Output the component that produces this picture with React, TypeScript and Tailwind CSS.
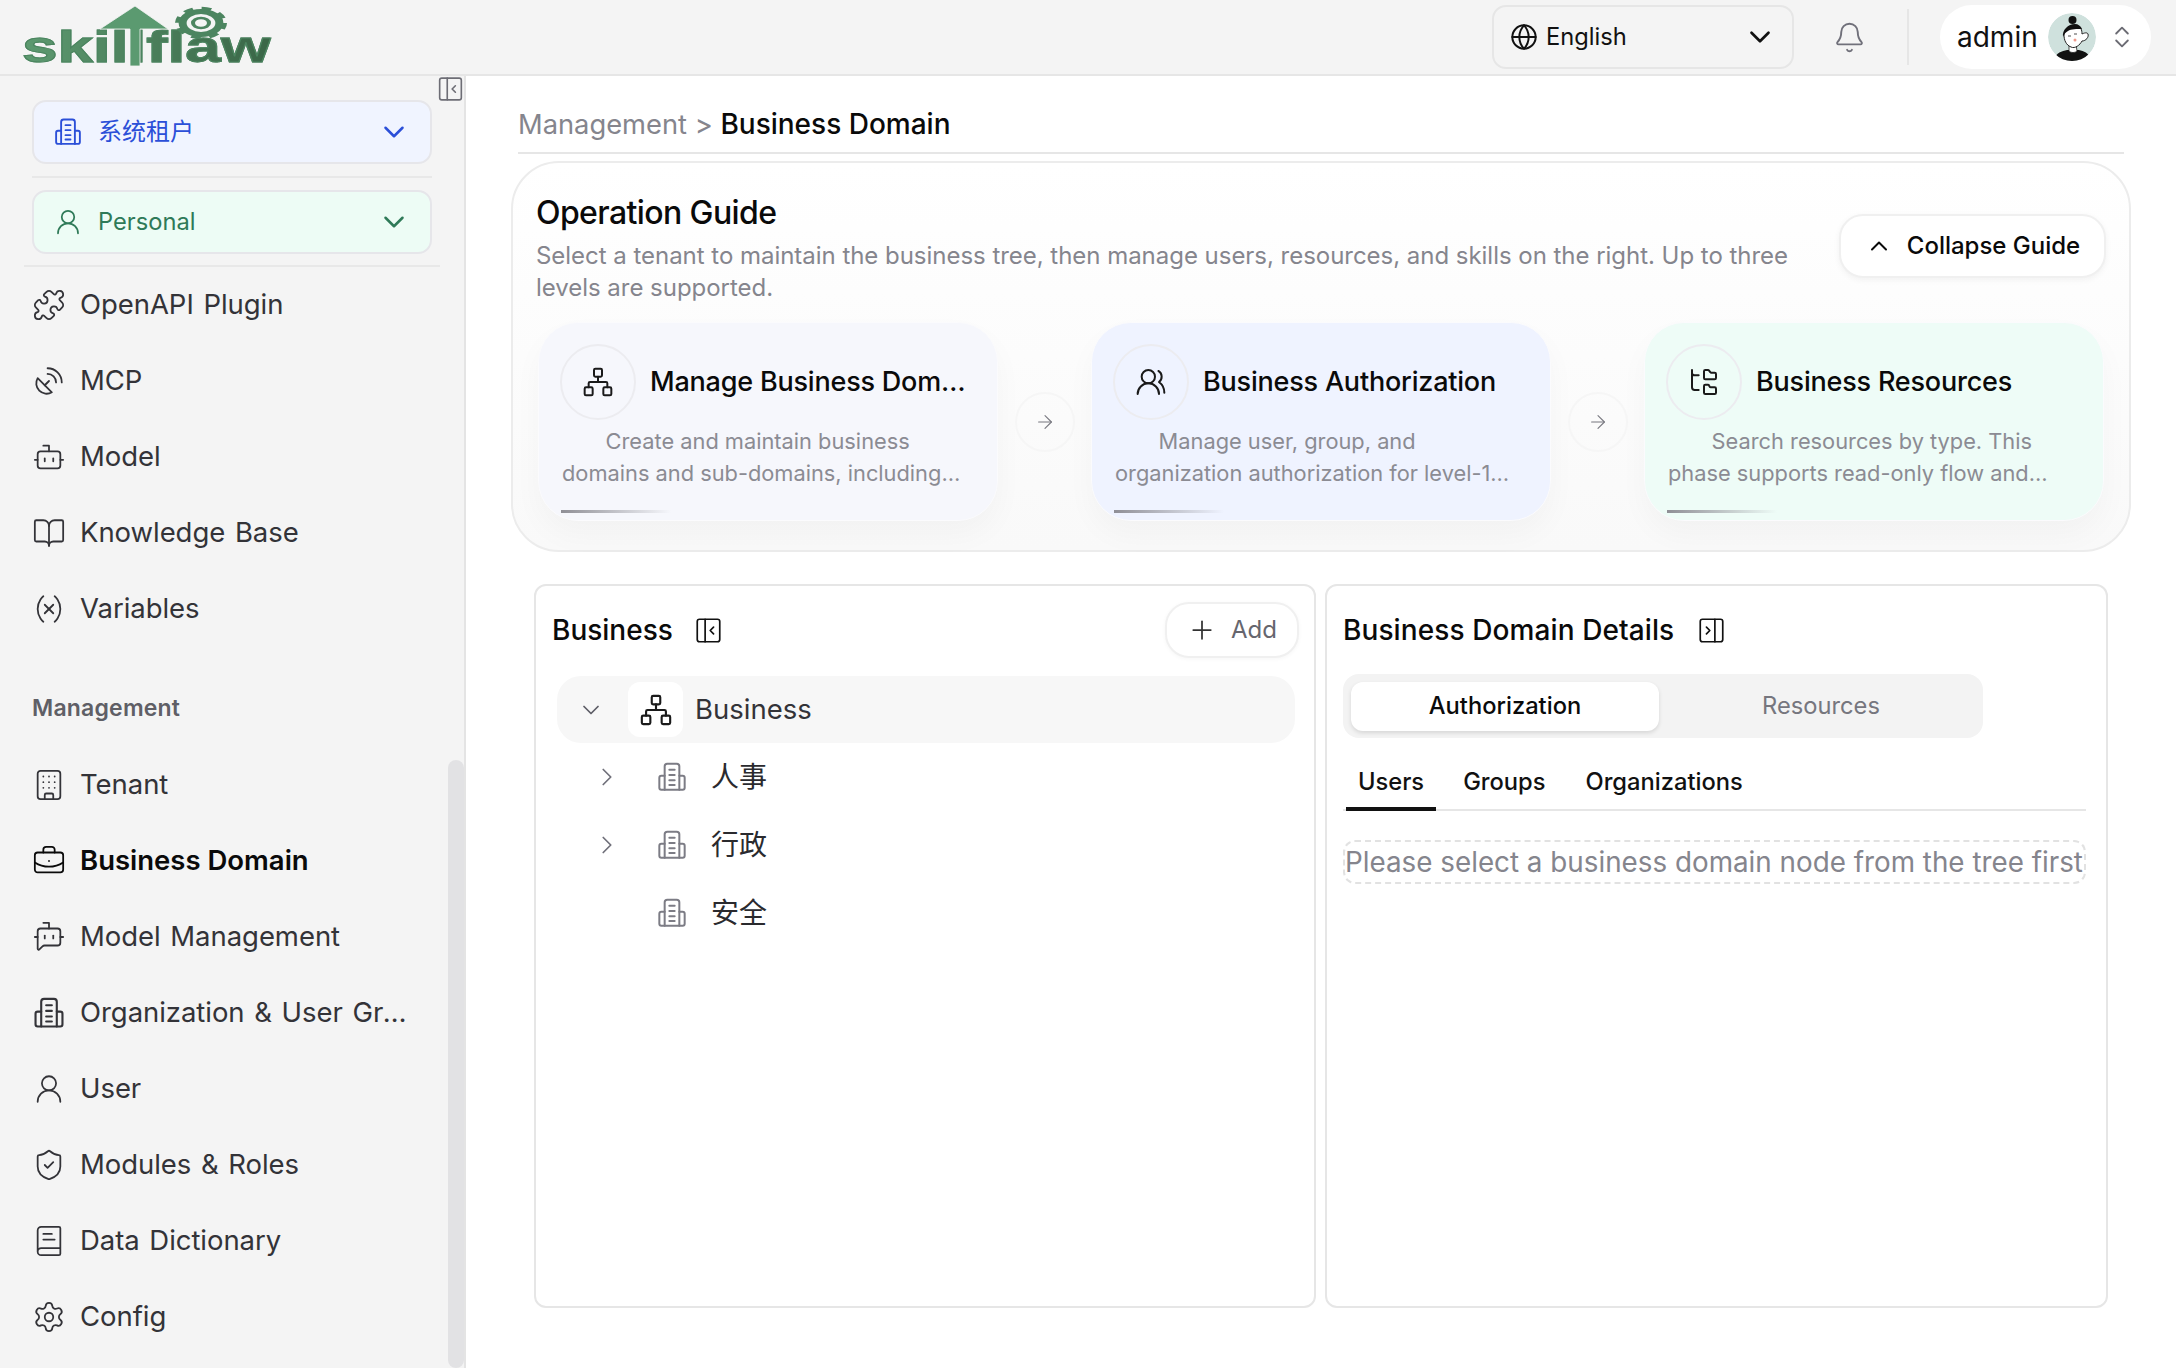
import React from "react";
import {
    ArrowRight, Bell, BookOpen, BookText, Bot, BotMessageSquare, BriefcaseBusiness, Building, ChevronDown,
    ChevronRight, ChevronUp, ChevronsUpDown, FolderTree, Globe, Network, Plus, Puzzle, SatelliteDish, Settings,
    ShieldCheck, UserRound, UsersRound, Variable,
} from "lucide-react";

function TowerIcon({className}: { className?: string }) {
    return (
        <svg viewBox="0 0 24 24" fill="none" stroke="currentColor" strokeWidth="1.5" strokeLinecap="round" strokeLinejoin="round" className={className}>
            <path d="M6.5 21.5V4a2 2 0 0 1 2-2h7a2 2 0 0 1 2 2v17.5"/>
            <path d="M6.5 11H4a1.5 1.5 0 0 0-1.500 1.500V20A1.500 1.500 0 0 0 4 21.500h16a1.500 1.500 0 0 0 1.500-1.500v-7.500A1.500 1.500 0 0 0 20 11h-2.500"/>
            <path d="M10 6.500h4M10 10.500h4M10 14.500h4M10 18h4"/>
        </svg>
    )
}

function PanelToggle({className, right}: { className?: string, right?: boolean }) {
    return (
        <svg viewBox="0 0 24 24" fill="none" stroke="currentColor" strokeWidth="1.500" strokeLinecap="round" strokeLinejoin="round" className={className}>
            <rect x="2" y="2" width="20" height="20" rx="2"/>
            {right ? <path d="M15 2v20M7.500 9l3 3-3 3"/> : <path d="M9 2v20M16.500 9l-3 3 3 3"/>}
        </svg>
    )
}

function Logo() {
    return (
        <div className="relative h-[75px] w-[272px] shrink-0">
            <span className="absolute left-[22px] top-[21px] origin-left scale-x-[1.42] bg-gradient-to-r from-[#5d9a70] to-[#3a6647] bg-clip-text font-['Liberation_Sans',sans-serif] text-[45px] font-bold leading-[52px] text-transparent [-webkit-text-stroke:1px_#4c8560]">
                skillflaw
            </span>
            <svg viewBox="0 0 272 75" className="absolute left-0 top-0 h-[75px] w-[272px]">
                <path d="M100 29 L135 6 L168 29 L140 29 L140 66 L130 66 L130 29 Z" fill="#5b9a70" stroke="#f4f4f4" strokeWidth="0.800"/>
                <g transform="translate(201 23) scale(1.600 1)" fill="none" stroke="#4c8560">
                    <circle r="11.500" strokeWidth="5"/>
                    <circle r="14.500" strokeWidth="3.500" strokeDasharray="6 5.380"/>
                    <circle r="5" strokeWidth="2.500"/>
                </g>
            </svg>
        </div>
    )
}

function Avatar() {
    return (
        <svg viewBox="0 0 48 48" className="h-[48px] w-[48px] shrink-0 rounded-full">
            <circle cx="24" cy="24" r="24" fill="#cfe1dd"/>
            <path d="M7 44c3-5 9-7 14-7 2 2 6 2 8 0 5 0 10 2 13 7v4H7Z" fill="#111"/>
            <path d="M21 33v5c2 2 6 2 8 0l-1-7Z" fill="#fff" stroke="#222" strokeWidth="0.800"/>
            <path d="M16 22c0-6 7-10 13-9 4 1 5 4 5 8 2-1 5-2 6 0 1 3-2 7-6 7-2 4-7 8-11 6-5-2-7-7-7-12Z" fill="#fff" stroke="#222" strokeWidth="1"/>
            <path d="M15 24c-1-7 5-13 12-13 3 0 6 2 7 5-5 0-11 0-14 2-2 1-4 3-5 6Z" fill="#111"/>
            <circle cx="24.500" cy="7" r="4" fill="#111"/>
            <circle cx="27" cy="27" r="1.500" fill="#ef9a8c"/>
            <path d="M20 23h3M26 21h3" stroke="#222" strokeWidth="0.800"/>
        </svg>
    )
}

function SideItem({icon: Icon, label, active}: { icon: React.ElementType, label: string, active?: boolean }) {
    return (
        <div className={active
            ? "flex h-[76px] items-center gap-[14px] pl-[32px] pr-[50px] text-[#0a0a0a]"
            : "flex h-[76px] items-center gap-[14px] pl-[32px] pr-[50px] text-[#333338]"}>
            <Icon className="h-[34px] w-[34px] shrink-0" strokeWidth={1.25}/>
            <span className={active
                ? "truncate text-[27.500px] font-semibold"
                : "truncate text-[27.500px] tracking-[-0.05px] [word-spacing:2px]"}>{label}</span>
        </div>
    )
}

function Sidebar() {
    return (
        <aside className="relative w-[466px] shrink-0 overflow-hidden border-r-2 border-[#e4e4e4] bg-[#f4f4f4] pt-[24px]">
            <PanelToggle className="absolute right-0 top-0 h-[26px] w-[27px] text-[#6d6d75]"/>
            <div className="absolute bottom-0 right-0 top-[684px] w-[16px] rounded-full bg-[#e2e2e4]"/>
            <div className="mx-[32px] flex h-[64px] w-[400px] items-center justify-between rounded-[14px] border-2 border-[#e6e6ea] bg-[#f0f4ff] pl-[19px] pr-[19px] text-[#2b4fd8]">
                <div className="flex items-center gap-[15px]">
                    <TowerIcon className="h-[30px] w-[30px]"/>
                    <span className="text-[24px]">系统租户</span>
                </div>
                <ChevronDown className="h-[34px] w-[34px]" strokeWidth={1.8}/>
            </div>
            <div className="mx-[32px] my-[12px] h-[2px] w-[400px] bg-[#e8e8e8]"/>
            <div className="mx-[32px] flex h-[64px] w-[400px] items-center justify-between rounded-[14px] border-2 border-[#e6e6ea] bg-[#edfcf5] pl-[19px] pr-[19px] text-[#2f7a58]">
                <div className="flex items-center gap-[15px]">
                    <UserRound className="h-[30px] w-[30px]" strokeWidth={1.4}/>
                    <span className="text-[23.700px]">Personal</span>
                </div>
                <ChevronDown className="h-[34px] w-[34px]" strokeWidth={1.8}/>
            </div>
            <div className="mx-[24px] mt-[11px] h-[2px] w-[416px] bg-[#e8e8e8]"/>
            <SideItem icon={Puzzle} label="OpenAPI Plugin"/>
            <SideItem icon={SatelliteDish} label="MCP"/>
            <SideItem icon={Bot} label="Model"/>
            <SideItem icon={BookOpen} label="Knowledge Base"/>
            <SideItem icon={Variable} label="Variables"/>
            <div className="h-[100px] pl-[32px] pt-[47px] text-[23px] font-semibold leading-[28px] tracking-[0.2px] text-[#5f5f66]">Management</div>
            <SideItem icon={Building} label="Tenant"/>
            <SideItem icon={BriefcaseBusiness} label="Business Domain" active/>
            <SideItem icon={BotMessageSquare} label="Model Management"/>
            <SideItem icon={TowerIcon} label="Organization & User Groups"/>
            <SideItem icon={UserRound} label="User"/>
            <SideItem icon={ShieldCheck} label="Modules & Roles"/>
            <SideItem icon={BookText} label="Data Dictionary"/>
            <SideItem icon={Settings} label="Config"/>
        </aside>
    )
}

const guideCards = [
    {
        icon: Network,
        title: "Manage Business Domains",
        desc: "Create and maintain business domains and sub-domains, including creating, editing and removing nodes in the tree.",
        bg: "bg-[#f6f7fc]",
    },
    {
        icon: UsersRound,
        title: "Business Authorization",
        desc: "Manage user, group, and organization authorization for level-1 domains and for each of their sub-domains.",
        bg: "bg-[#eff3ff]",
    },
    {
        icon: FolderTree,
        title: "Business Resources",
        desc: "Search resources by type. This phase supports read-only flow and management of the resources in each domain.",
        bg: "bg-[#eefcf7]",
    },
]

function GuideCard({card}: { card: typeof guideCards[number] }) {
    const Icon = card.icon
    return (
        <div className={"relative h-[199px] w-[460px] shrink-0 overflow-hidden rounded-[40px] border border-[#fbfbfd] pl-[21px] pr-[22px] pt-[21px] shadow-[0_14px_30px_rgba(0,0,0,0.03)] " + card.bg}>
            <div className="flex items-center gap-[14px]">
                <div className="flex h-[76px] w-[76px] shrink-0 items-center justify-center rounded-full border-2 border-[#ececf0]">
                    <Icon className="h-[32px] w-[32px] text-[#1a1a1a]" strokeWidth={1.5}/>
                </div>
                <span className="truncate text-[27px] font-medium tracking-[-0.2px] text-[#0a0a0a]">{card.title}</span>
            </div>
            <p className="ml-[2px] mt-[5px] line-clamp-2 w-[399px] indent-[2em] text-[21.800px] leading-[32px] text-[#8b8b93]">{card.desc}</p>
            <div className="absolute bottom-[7px] left-[22px] h-[3px] w-[110px] bg-gradient-to-r from-[#8f8f96] to-transparent"/>
        </div>
    )
}

function GuideArrow() {
    return (
        <div className="flex w-[93px] shrink-0 items-center justify-center">
            <div className="flex h-[60px] w-[60px] items-center justify-center rounded-full border-2 border-[#f6f6f6]">
                <ArrowRight className="h-[22px] w-[22px] text-[#77777f]" strokeWidth={1.2}/>
            </div>
        </div>
    )
}

function Guide() {
    return (
        <section className="h-[391px] rounded-[48px] border-2 border-[#ececec] bg-gradient-to-b from-white to-[#f9f9f9] px-[23px] pt-[30px]">
            <div className="flex items-center gap-[40px]">
                <div className="flex-1">
                    <h2 className="text-[32px] font-medium leading-[40px] tracking-[-0.6px] text-[#0a0a0a]">Operation Guide</h2>
                    <p className="mt-[7px] text-[24px] leading-[32px] tracking-[-0.03px] text-[#85858d]">
                        Select a tenant to maintain the business tree, then manage users, resources, and skills on the right. Up to three levels are supported.
                    </p>
                </div>
                <button className="-mt-[5px] flex h-[64px] w-[267px] shrink-0 items-center justify-center gap-[14px] rounded-[24px] border-2 border-[#f0f0f0] bg-white text-[24px] font-medium text-[#0a0a0a] shadow-[0_2px_6px_rgba(0,0,0,0.05)]">
                    <ChevronUp className="h-[28px] w-[28px]" strokeWidth={1.7}/>
                    Collapse Guide
                </button>
            </div>
            <div className="ml-[2px] mt-[18px] flex">
                <GuideCard card={guideCards[0]}/>
                <GuideArrow/>
                <GuideCard card={guideCards[1]}/>
                <GuideArrow/>
                <GuideCard card={guideCards[2]}/>
            </div>
        </section>
    )
}

function TreeChild({label, expandable}: { label: string, expandable?: boolean }) {
    return (
        <div className="flex h-[68px] items-center pl-[35px] text-[#2a2a2e]">
            <div className="w-[30px]">
                {expandable && <ChevronRight className="h-[30px] w-[30px] text-[#70707a]" strokeWidth={1.4}/>}
            </div>
            <TowerIcon className="ml-[34px] h-[32px] w-[32px] text-[#7c7c85]"/>
            <span className="ml-[23px] text-[28px]">{label}</span>
        </div>
    )
}

function BusinessPanel() {
    return (
        <div className="w-[782px] rounded-[12px] border-2 border-[#e6e6e6] bg-white pl-[16px] pr-[15px] pt-[16px]">
            <div className="flex h-[56px] items-center justify-between">
                <div className="flex items-center gap-[22px]">
                    <span className="text-[28px] font-medium text-[#0a0a0a]">Business</span>
                    <PanelToggle className="h-[27px] w-[27px] text-[#111]"/>
                </div>
                <button className="flex h-[56px] w-[134px] items-center justify-center gap-[14px] rounded-[24px] border-2 border-[#f0f0f0] bg-white text-[24px] text-[#66666e] shadow-[0_1px_4px_rgba(0,0,0,0.04)]">
                    <Plus className="h-[30px] w-[30px] text-[#333]" strokeWidth={1.4}/>
                    Add
                </button>
            </div>
            <div className="ml-[5px] mr-[4px] mt-[18px]">
                <div className="flex h-[67px] items-center rounded-[24px] bg-[#f7f7f7] pl-[20px] pr-[16px]">
                    <ChevronDown className="h-[28px] w-[28px] text-[#5d5d66]" strokeWidth={1.5}/>
                    <div className="ml-[23px] flex h-[55px] w-[55px] items-center justify-center rounded-[12px] bg-white">
                        <Network className="h-[34px] w-[34px] text-[#1a1a1a]" strokeWidth={1.5}/>
                    </div>
                    <span className="ml-[12px] text-[27.500px] text-[#333338]">Business</span>
                </div>
                <TreeChild label="人事" expandable/>
                <TreeChild label="行政" expandable/>
                <TreeChild label="安全"/>
            </div>
        </div>
    )
}

function DetailsPanel() {
    return (
        <div className="w-[783px] rounded-[12px] border-2 border-[#e6e6e6] bg-white pl-[16px] pr-[20px] pt-[16px]">
            <div className="flex h-[56px] items-center gap-[24px]">
                <span className="text-[28px] font-medium tracking-[0.1px] text-[#0a0a0a]">Business Domain Details</span>
                <PanelToggle right className="h-[27px] w-[27px] text-[#111]"/>
            </div>
            <div className="mt-[16px] flex h-[64px] w-[640px] items-center rounded-[16px] bg-[#f3f3f3] px-[8px]">
                <div className="flex h-[49px] w-[308px] items-center justify-center rounded-[12px] bg-white text-[23.700px] font-medium text-[#0a0a0a] shadow-[0_2px_4px_rgba(0,0,0,0.12)]">Authorization</div>
                <div className="flex h-[49px] flex-1 items-center justify-center pl-[8px] text-[23.700px] text-[#76767e]">Resources</div>
            </div>
            <div className="mt-[19px] flex h-[54px] gap-[14px] border-b-2 border-[#e6e6e6] pl-[3px] text-[23.700px] text-[#111]">
                <div className="-mb-[2px] flex h-[54px] items-center border-b-4 border-[#111] px-[12px] font-medium">Users</div>
                <div className="flex h-[50px] items-center px-[13px] font-medium">Groups</div>
                <div className="flex h-[50px] items-center px-[13px] font-medium">Organizations</div>
            </div>
            <div className="mt-[29px] flex h-[44px] items-center overflow-hidden whitespace-nowrap rounded-[12px] border-2 border-dashed border-[#e2e2e2] pt-[2px] text-[27.800px] text-[#85858d]">
                Please select a business domain node from the tree first
            </div>
        </div>
    )
}

export default function App() {
    return (
        <div className="flex h-screen w-screen flex-col overflow-hidden bg-white font-['Inter','Noto_Sans_CJK_SC',sans-serif]">
            <header className="flex h-[76px] shrink-0 items-center justify-between border-b-2 border-[#e6e6e6] bg-[#f4f4f4] pr-[25px]">
                <Logo/>
                <div className="flex items-center">
                    <div className="flex h-[64px] w-[302px] items-center justify-between rounded-[14px] border-2 border-[#e6e6e6] pl-[16px] pr-[15px] text-[23.700px] text-[#111]">
                        <div className="flex items-center gap-[8px]">
                            <Globe className="h-[28px] w-[28px]" strokeWidth={1.7}/>
                            English
                        </div>
                        <ChevronDown className="h-[34px] w-[34px]" strokeWidth={1.9}/>
                    </div>
                    <Bell className="ml-[39px] h-[33px] w-[33px] text-[#70707a]" strokeWidth={1.4}/>
                    <div className="ml-[41px] h-[56px] w-[2px] bg-[#e6e6e6]"/>
                    <div className="ml-[31px] flex h-[64px] w-[211px] items-center rounded-full bg-white pl-[17px] text-[#111]">
                        <span className="text-[28px]">admin</span>
                        <div className="ml-[10px]"><Avatar/></div>
                        <ChevronsUpDown className="ml-[12px] h-[28px] w-[28px] text-[#6b6b73]" strokeWidth={1.6}/>
                    </div>
                </div>
            </header>
            <div className="flex min-h-0 flex-1">
                <Sidebar/>
                <main className="min-w-0 flex-1 px-[45px] pt-[30px]">
                    <div className="mx-[7px] border-b-2 border-[#e6e6e6] pb-[9px] text-[28px] leading-[36px]">
                        <span className="text-[27.300px] text-[#85858d]">Management &gt; </span>
                        <span className="font-medium text-[#0a0a0a]">Business Domain</span>
                    </div>
                    <div className="mt-[7px]"><Guide/></div>
                    <div className="mt-[32px] flex h-[724px] gap-[9px] px-[23px]">
                        <BusinessPanel/>
                        <DetailsPanel/>
                    </div>
                </main>
            </div>
        </div>
    )
}
